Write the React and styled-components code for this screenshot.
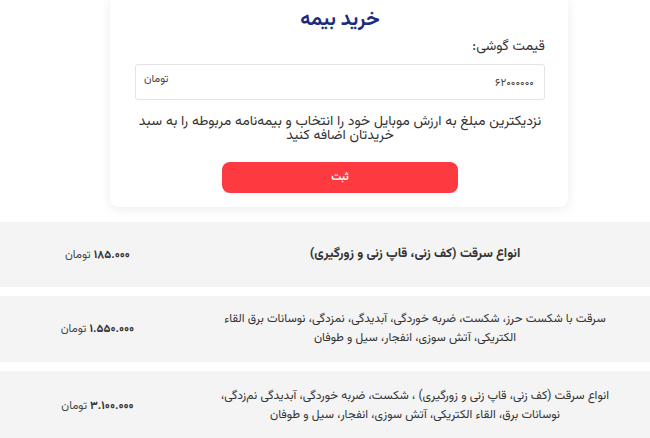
import React from "react";
import styled, { createGlobalStyle } from "styled-components";

const Global = createGlobalStyle`
  html, body { margin: 0; padding: 0; background: #ffffff; }
  body {
    font-family: "Vazirmatn", "Noto Sans Arabic", "DejaVu Sans", sans-serif;
    color: #333;
    overflow: hidden;
  }
`;

const Page = styled.div`
  direction: rtl;
  width: 650px;
  height: 438px;
  overflow: hidden;
`;

const CardWrap = styled.div`
  display: flex;
  justify-content: flex-start;
  padding-right: 82px;
`;

const Card = styled.div`
  width: 458px;
  box-sizing: border-box;
  background: #fff;
  border-radius: 0 0 8px 8px;
  box-shadow: 0 2px 12px rgba(0, 0, 0, 0.08);
  padding: 6px 23px 14px 25px;
  display: flex;
  flex-direction: column;
`;

const Title = styled.h2`
  margin: 0;
  text-align: center;
  font-size: 20px;
  font-weight: 700;
  color: #1b2c80;
  line-height: 28px;
`;

const Label = styled.div`
  margin-top: 2px;
  font-size: 14px;
  color: #333;
  line-height: 22px;
`;

const InputBox = styled.div`
  margin-top: 6px;
  height: 36px;
  border: 1px solid #e4e4e4;
  border-radius: 3px;
  box-sizing: border-box;
  display: flex;
  align-items: center;
  justify-content: space-between;
  padding: 0 10px 0 8px;
`;

const InputValue = styled.span`
  font-size: 11px;
  color: #444;
  margin-top: 2px;
`;

const Unit = styled.span`
  font-size: 11px;
  color: #444;
  margin-top: -6px;
`;

const Hint = styled.p`
  margin: 15px 0 0;
  text-align: center;
  font-size: 14px;
  line-height: 14px;
  color: #333;
  padding: 0;
`;

const Submit = styled.button`
  align-self: center;
  margin-top: 19px;
  width: 236px;
  height: 31px;
  border: none;
  border-radius: 8px;
  background: #fd3a3f;
  color: #fff;
  font-family: inherit;
  font-size: 11px;
  font-weight: 700;
  cursor: pointer;
`;

const Rows = styled.div`
  margin-top: 15px;
  display: flex;
  flex-direction: column;
  gap: 9px;
`;

const Row = styled.div`
  display: grid;
  grid-template-columns: 440px 195px;
  padding-right: 15px;
  align-items: center;
  background: #f4f4f4;
  height: ${(p) => p.$h}px;
`;

const Desc = styled.div`
  text-align: center;
  font-size: ${(p) => (p.$bold ? 13 : 12)}px;
  font-weight: ${(p) => (p.$bold ? 700 : 400)};
  line-height: 19px;
  color: #333;
  padding: 0 10px;
`;

const Price = styled.div`
  text-align: center;
  font-size: 11.5px;
  color: #444;
`;

const Amount = styled.b`
  font-weight: 700;
  color: #333;
`;

const plans = [
  {
    desc: "انواع سرقت (کف زنی، قاپ زنی و زورگیری)",
    bold: true,
    price: "۱۸۵.۰۰۰",
    h: 65,
  },
  {
    desc: "سرقت با شکست حرز، شکست، ضربه خوردگی، آبدیدگی، نمزدگی، نوسانات برق القاء الکتریکی، آتش سوزی، انفجار، سیل و طوفان",
    price: "۱.۵۵۰.۰۰۰",
    h: 66,
  },
  {
    desc: "انواع سرقت (کف زنی، قاپ زنی و زورگیری) ، شکست، ضربه خوردگی، آبدیدگی نم‌زدگی، نوسانات برق، القاء الکتریکی، آتش سوزی، انفجار، سیل و طوفان",
    price: "۳.۱۰۰.۰۰۰",
    h: 70,
  },
];

export default function App() {
  return (
    <Page>
      <Global />
      <CardWrap>
        <Card>
          <Title>خرید بیمه</Title>
          <Label>قیمت گوشی:</Label>
          <InputBox>
            <InputValue>۶۲۰۰۰۰۰۰</InputValue>
            <Unit>تومان</Unit>
          </InputBox>
          <Hint>
            نزدیکترین مبلغ به ارزش موبایل خود را انتخاب و بیمه‌نامه مربوطه را به سبد خریدتان اضافه کنید
          </Hint>
          <Submit>ثبت</Submit>
        </Card>
      </CardWrap>
      <Rows>
        {plans.map((p, i) => (
          <Row key={i} $h={p.h}>
            <Desc $bold={p.bold}>{p.desc}</Desc>
            <Price>
              <Amount>{p.price}</Amount> تومان
            </Price>
          </Row>
        ))}
      </Rows>
    </Page>
  );
}
